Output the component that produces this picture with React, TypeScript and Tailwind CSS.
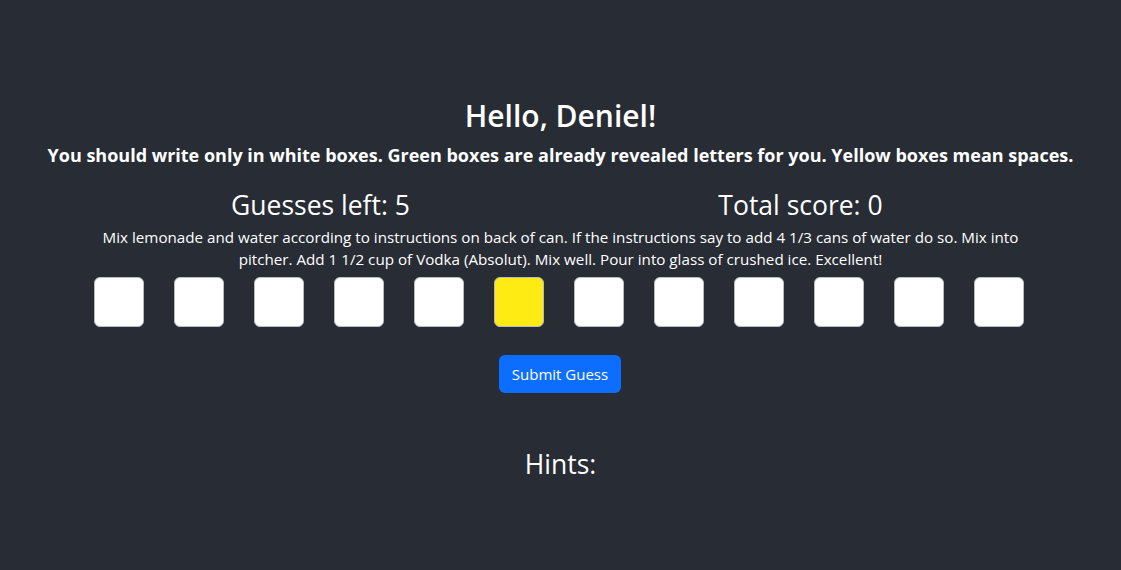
import React, { useState } from 'react';

const hint =
  'Mix lemonade and water according to instructions on back of can. If the instructions say to add 4 1/3 cans of water do so. Mix into pitcher. Add 1 1/2 cup of Vodka (Absolut). Mix well. Pour into glass of crushed ice. Excellent!';

// 12 letters, the sixth one is a space
const cells = [0, 0, 0, 0, 0, 1, 0, 0, 0, 0, 0, 0];

const App = () => {
  const [letters, setLetters] = useState<string[]>(cells.map(() => ''));

  return (
    <main
      className="min-h-screen bg-[#282c34] text-white text-center"
      style={{ fontFamily: '"Open Sans", "Noto Sans", sans-serif' }}
    >
      <div className="pt-[98px]">
        <h2 className="text-[30px] font-semibold leading-[1.2] mb-[11px]">Hello, Deniel!</h2>
        <h5 className="text-[18px] font-bold leading-[1.2]">
          You should write only in white boxes. Green boxes are already revealed letters for you. Yellow boxes mean spaces.
        </h5>

        <div className="w-[960px] mx-auto mt-[23px]">
          <div className="grid grid-cols-2">
            <h3 className="text-[26.5px] leading-[1.2]">Guesses left: 5</h3>
            <h3 className="text-[26.5px] leading-[1.2]">Total score: 0</h3>
          </div>
          <p className="text-[15.2px] leading-[22px] mt-[5px] px-3">{hint}</p>

          <div className="flex justify-center gap-[30px] mt-[7px] pr-[4px]">
            {cells.map((c, i) => (
              <input
                key={i}
                maxLength={1}
                readOnly={c === 1}
                value={letters[i]}
                onChange={(e) => {
                  const next = [...letters];
                  next[i] = e.target.value;
                  setLetters(next);
                }}
                className={`w-[50px] h-[50px] rounded-[6px] border border-[#b8bcc2] text-center text-black text-xl ${
                  c === 1 ? 'bg-[#ffeb14]' : 'bg-white'
                }`}
              />
            ))}
          </div>

          <button className="mt-[28px] h-[38px] px-[13px] rounded-[6px] bg-[#0d6efd] text-white text-[15px] mr-[1px]">
            Submit Guess
          </button>

          <h3 className="text-[26.5px] leading-[1.2] mt-[56px]">Hints:</h3>
        </div>
      </div>
    </main>
  );
};

export default App;
